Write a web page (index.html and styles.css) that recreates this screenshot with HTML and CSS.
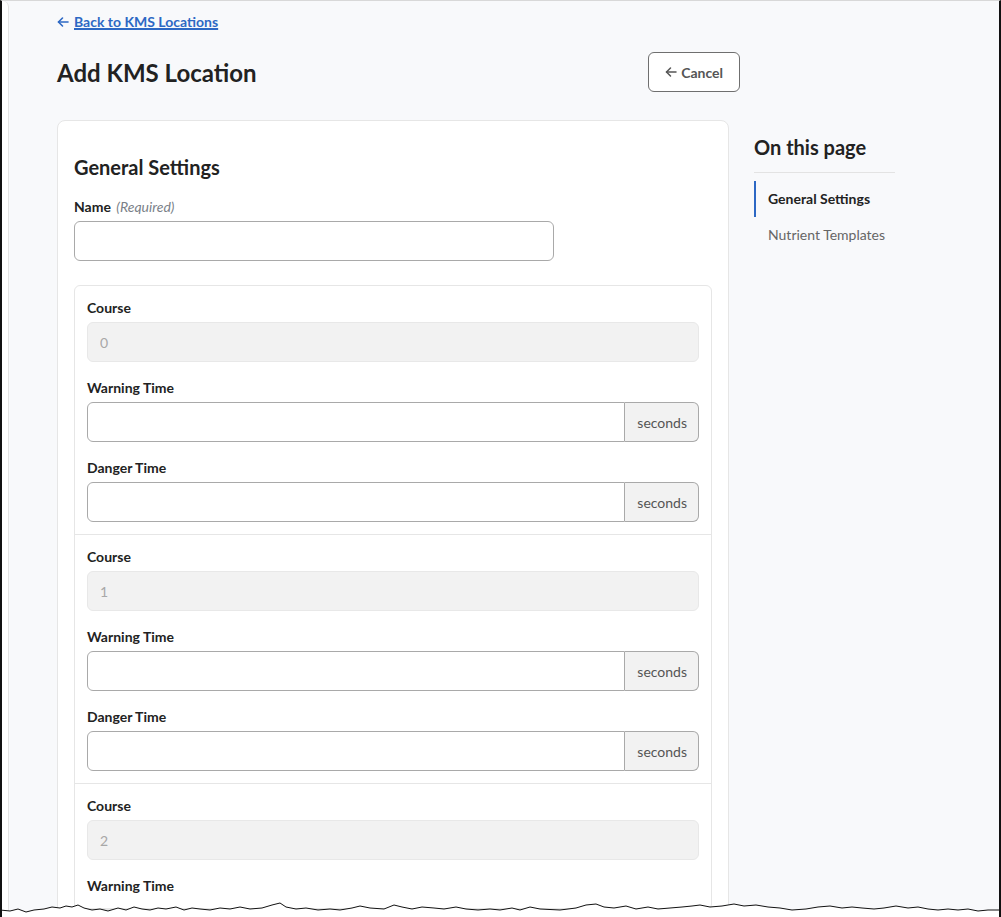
FILE: index.html
```html
<!DOCTYPE html>
<html lang="en">

<head>
    <meta charset="UTF-8">
    <meta name="viewport" content="width=device-width, initial-scale=1.0">
    <title>Add KMS Location</title>
    <link rel="stylesheet" href="styles.css">
</head>

<body>
    <div id="frame">
        <div id="rail"></div>
        <main id="page">
            <a class="back" href="#">
                <svg class="arrow" width="12" height="12" viewBox="0 0 12 12" fill="none" stroke="currentColor" stroke-width="1.6" stroke-linecap="round" stroke-linejoin="round">
                    <path d="M11 6H1.5" />
                    <path d="M5.5 2L1.5 6l4 4" />
                </svg>
                <span>Back to KMS Locations</span>
            </a>
            <div class="header">
                <h1>Add KMS Location</h1>
                <button class="cancel">
                    <svg class="arrow" width="12" height="12" viewBox="0 0 12 12" fill="none" stroke="currentColor" stroke-width="1.5" stroke-linecap="round" stroke-linejoin="round">
                        <path d="M11 6H1.5" />
                        <path d="M5.5 2L1.5 6l4 4" />
                    </svg>
                    Cancel
                </button>
            </div>
            <div class="columns">
                <div class="card">
                    <h2>General Settings</h2>
                    <div class="field">
                        <label>Name <em>(Required)</em></label>
                        <input type="text" class="input name">
                    </div>
                    <div class="courses">
                        <div class="course">
                            <div class="field">
                                <label>Course</label>
                                <input type="text" class="input" value="0" disabled>
                            </div>
                            <div class="field">
                                <label>Warning Time</label>
                                <div class="group">
                                    <input type="text" class="input">
                                    <span class="addon">seconds</span>
                                </div>
                            </div>
                            <div class="field">
                                <label>Danger Time</label>
                                <div class="group">
                                    <input type="text" class="input">
                                    <span class="addon">seconds</span>
                                </div>
                            </div>
                        </div>
                        <div class="course">
                            <div class="field">
                                <label>Course</label>
                                <input type="text" class="input" value="1" disabled>
                            </div>
                            <div class="field">
                                <label>Warning Time</label>
                                <div class="group">
                                    <input type="text" class="input">
                                    <span class="addon">seconds</span>
                                </div>
                            </div>
                            <div class="field">
                                <label>Danger Time</label>
                                <div class="group">
                                    <input type="text" class="input">
                                    <span class="addon">seconds</span>
                                </div>
                            </div>
                        </div>
                        <div class="course">
                            <div class="field">
                                <label>Course</label>
                                <input type="text" class="input" value="2" disabled>
                            </div>
                            <div class="field">
                                <label>Warning Time</label>
                            </div>
                        </div>
                    </div>
                </div>
                <nav class="toc">
                    <h3>On this page</h3>
                    <ul>
                        <li class="active">General Settings</li>
                        <li>Nutrient Templates</li>
                    </ul>
                </nav>
            </div>
        </main>
        <svg class="torn" width="1001" height="24" viewBox="0 0 1001 24" preserveAspectRatio="none">
            <path d="M0 12 L10 13 L18 11 L26 14 L34 12 L44 11 L52 9 L60 10 L66 8 L72 9 L78 7 L84 10 L92 12 L100 11 L108 13 L118 10 L126 12 L134 9 L142 11 L150 12 L158 10 L166 11 L176 9 L184 12 L192 10 L200 11 L210 12 L220 10 L230 11 L240 9 L250 11 L262 10 L272 7 L280 5 L286 9 L296 11 L306 10 L318 12 L330 11 L340 12 L352 10 L360 8 L370 10 L384 11 L394 7 L402 9 L412 11 L422 9 L434 10 L444 11 L456 9 L466 11 L478 12 L490 11 L500 12 L512 10 L520 12 L530 9 L540 11 L560 12 L576 10 L586 7 L596 6 L604 9 L614 10 L626 8 L636 11 L648 9 L658 11 L670 10 L682 9 L692 8 L700 7 L710 9 L722 8 L734 6 L744 8 L756 7 L768 9 L780 10 L792 12 L806 11 L818 9 L830 8 L842 10 L852 9 L862 10 L874 11 L884 10 L896 8 L908 10 L918 9 L928 11 L938 12 L948 11 L958 12 L968 11 L978 13 L988 12 L1000 12 L1001 12 L1001 24 L0 24 Z" fill="#fff" stroke="#111" stroke-width="1" />
        </svg>
    </div>
</body>

</html>
```

FILE: styles.css
```css
* {
    box-sizing: border-box;
}

body {
    margin: 0;
    background-color: #fff;
    font-family: Lato, "Noto Sans", sans-serif;
    color: #222;
}

#frame {
    position: relative;
    width: 1001px;
    height: 917px;
    overflow: hidden;
    display: flex;
    border-left: 2px solid #111;
    border-right: 2px solid #111;
    border-top: 1px solid #d8d8d8;
    background-color: #f8f9fb;
}

#rail {
    width: 7px;
    flex-shrink: 0;
    background-color: #fff;
    border-right: 1px solid #e3e3e3;
    border-top-right-radius: 6px;
}

#page {
    flex: 1;
    padding: 11px 0 0 48px;
}

.back {
    display: inline-flex;
    align-items: center;
    gap: 5px;
    color: #2d68c4;
    font-size: 14px;
    font-weight: 700;
    line-height: 18px;
}

.back span {
    text-decoration: underline;
    text-underline-offset: 2px;
}

.header {
    width: 683px;
    display: flex;
    align-items: center;
    justify-content: space-between;
    margin-top: 21px;
}

h1 {
    margin: 0;
    font-size: 24px;
    font-weight: 700;
    color: #222;
}

.cancel {
    display: flex;
    align-items: center;
    gap: 4px;
    height: 40px;
    padding: 0 16px;
    border: 1px solid #6f6f6f;
    border-radius: 6px;
    background-color: #fff;
    color: #555;
    font-family: inherit;
    font-size: 14px;
    font-weight: 700;
    cursor: pointer;
}

.columns {
    display: flex;
    align-items: flex-start;
    gap: 25px;
    margin-top: 28px;
}

.card {
    width: 672px;
    height: 900px;
    background-color: #fff;
    border: 1px solid #e6e6e6;
    border-radius: 8px;
    padding: 33px 16px 0;
}

h2 {
    margin: 0 0 17px;
    font-size: 20px;
    font-weight: 700;
    line-height: 26px;
}

.field {
    display: flex;
    flex-direction: column;
    gap: 4px;
}

.field label {
    font-size: 14px;
    font-weight: 700;
    line-height: 20px;
}

.field label em {
    font-weight: 400;
    color: #7a7f88;
    margin-left: 2px;
}

.input {
    height: 40px;
    width: 100%;
    border: 1px solid #a9a9a9;
    border-radius: 6px;
    background-color: #fff;
    padding: 0 12px;
    font-family: inherit;
    font-size: 14px;
}

.input.name {
    width: 480px;
}

.input:disabled {
    background-color: #f2f2f2;
    border-color: #e8e8e8;
    color: #a8a8a8;
}

.courses {
    margin-top: 24px;
    border: 1px solid #e6e6e6;
    border-radius: 6px;
}

.course {
    display: flex;
    flex-direction: column;
    gap: 16px;
    padding: 12px 12px 12px;
    border-bottom: 1px solid #e6e6e6;
}

.group {
    display: flex;
}

.group .input {
    flex: 1;
    border-top-right-radius: 0;
    border-bottom-right-radius: 0;
}

.addon {
    display: flex;
    align-items: center;
    padding: 0 11px 0 12px;
    height: 40px;
    border: 1px solid #a9a9a9;
    border-left: none;
    border-radius: 0 6px 6px 0;
    background-color: #f2f2f2;
    color: #555;
    font-size: 14px;
}

.toc {
    width: 141px;
    padding-top: 14px;
}

.toc h3 {
    margin: 0;
    padding-bottom: 12px;
    border-bottom: 1px solid #e3e3e3;
    font-size: 20px;
    font-weight: 700;
    line-height: 26px;
}

.toc ul {
    list-style: none;
    margin: 8px 0 0;
    padding: 0;
}

.toc li {
    padding: 8px 0 8px 12px;
    font-size: 14px;
    line-height: 20px;
    color: #666;
    border-left: 2px solid transparent;
}

.toc li.active {
    color: #222;
    font-weight: 700;
    border-left-color: #2d68c4;
}

.torn {
    position: absolute;
    left: -2px;
    bottom: -5px;
}
```
